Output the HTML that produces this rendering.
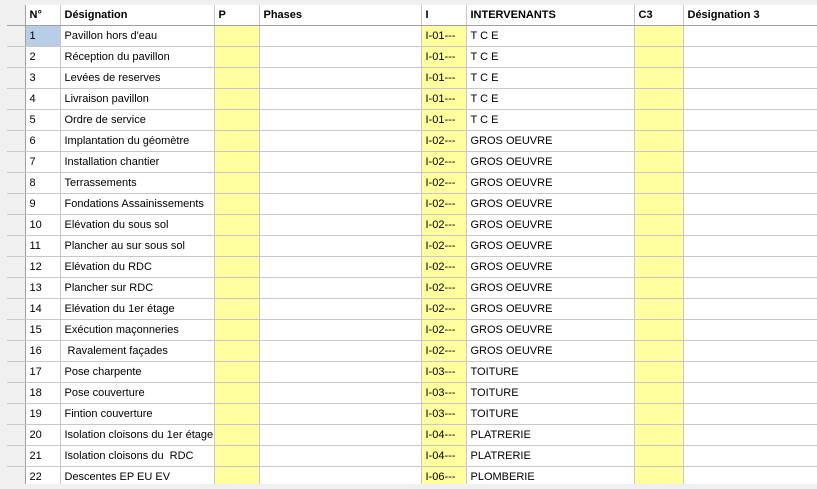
<!DOCTYPE html><html><head><style>
body{margin:0;width:817px;height:489px;background:#f0f0f0;overflow:hidden;font-family:"Liberation Sans",Arial,sans-serif;font-size:11px;position:relative}
table{position:absolute;left:7px;top:5px;width:810px;border-collapse:collapse;table-layout:fixed;background:#fff}
td,th{height:21px;box-sizing:border-box;border-right:1px solid #c8c8c8;border-bottom:1px solid #c8c8c8;padding:0 0 0 4px;white-space:nowrap;overflow:hidden;text-align:left;color:#000}
th{font-weight:bold;font-size:11px;background:#fff;border-bottom:1px solid #a0a0a0;height:20px}
td.ind,th.ind{background:#f0f0f0;border-right:1px solid #a0a0a0;padding:0}
.y{background:#ffff9f}
.sel{background:#b8cde8}
</style></head><body>
<table>
<colgroup><col style="width:18px"><col style="width:35px"><col style="width:154px"><col style="width:45px"><col style="width:162px"><col style="width:45px"><col style="width:168px"><col style="width:49px"><col style="width:134px"></colgroup>
<tr><th class="ind"></th><th>N°</th><th>Désignation</th><th>P</th><th>Phases</th><th>I</th><th>INTERVENANTS</th><th>C3</th><th>Désignation 3</th></tr>
<tr><td class="ind"></td><td class="sel">1</td><td>Pavillon hors d'eau</td><td class="y"></td><td></td><td class="y">I-01---</td><td>T C E</td><td class="y"></td><td></td></tr>
<tr><td class="ind"></td><td>2</td><td>Réception du pavillon</td><td class="y"></td><td></td><td class="y">I-01---</td><td>T C E</td><td class="y"></td><td></td></tr>
<tr><td class="ind"></td><td>3</td><td>Levées de reserves</td><td class="y"></td><td></td><td class="y">I-01---</td><td>T C E</td><td class="y"></td><td></td></tr>
<tr><td class="ind"></td><td>4</td><td>Livraison pavillon</td><td class="y"></td><td></td><td class="y">I-01---</td><td>T C E</td><td class="y"></td><td></td></tr>
<tr><td class="ind"></td><td>5</td><td>Ordre de service</td><td class="y"></td><td></td><td class="y">I-01---</td><td>T C E</td><td class="y"></td><td></td></tr>
<tr><td class="ind"></td><td>6</td><td>Implantation du géomètre</td><td class="y"></td><td></td><td class="y">I-02---</td><td>GROS OEUVRE</td><td class="y"></td><td></td></tr>
<tr><td class="ind"></td><td>7</td><td>Installation chantier</td><td class="y"></td><td></td><td class="y">I-02---</td><td>GROS OEUVRE</td><td class="y"></td><td></td></tr>
<tr><td class="ind"></td><td>8</td><td>Terrassements</td><td class="y"></td><td></td><td class="y">I-02---</td><td>GROS OEUVRE</td><td class="y"></td><td></td></tr>
<tr><td class="ind"></td><td>9</td><td>Fondations Assainissements</td><td class="y"></td><td></td><td class="y">I-02---</td><td>GROS OEUVRE</td><td class="y"></td><td></td></tr>
<tr><td class="ind"></td><td>10</td><td>Elévation du sous sol</td><td class="y"></td><td></td><td class="y">I-02---</td><td>GROS OEUVRE</td><td class="y"></td><td></td></tr>
<tr><td class="ind"></td><td>11</td><td>Plancher au sur sous sol</td><td class="y"></td><td></td><td class="y">I-02---</td><td>GROS OEUVRE</td><td class="y"></td><td></td></tr>
<tr><td class="ind"></td><td>12</td><td>Elévation du RDC</td><td class="y"></td><td></td><td class="y">I-02---</td><td>GROS OEUVRE</td><td class="y"></td><td></td></tr>
<tr><td class="ind"></td><td>13</td><td>Plancher sur RDC</td><td class="y"></td><td></td><td class="y">I-02---</td><td>GROS OEUVRE</td><td class="y"></td><td></td></tr>
<tr><td class="ind"></td><td>14</td><td>Elévation du 1er étage</td><td class="y"></td><td></td><td class="y">I-02---</td><td>GROS OEUVRE</td><td class="y"></td><td></td></tr>
<tr><td class="ind"></td><td>15</td><td>Exécution maçonneries</td><td class="y"></td><td></td><td class="y">I-02---</td><td>GROS OEUVRE</td><td class="y"></td><td></td></tr>
<tr><td class="ind"></td><td>16</td><td>&nbsp;Ravalement façades</td><td class="y"></td><td></td><td class="y">I-02---</td><td>GROS OEUVRE</td><td class="y"></td><td></td></tr>
<tr><td class="ind"></td><td>17</td><td>Pose charpente</td><td class="y"></td><td></td><td class="y">I-03---</td><td>TOITURE</td><td class="y"></td><td></td></tr>
<tr><td class="ind"></td><td>18</td><td>Pose couverture</td><td class="y"></td><td></td><td class="y">I-03---</td><td>TOITURE</td><td class="y"></td><td></td></tr>
<tr><td class="ind"></td><td>19</td><td>Fintion couverture</td><td class="y"></td><td></td><td class="y">I-03---</td><td>TOITURE</td><td class="y"></td><td></td></tr>
<tr><td class="ind"></td><td>20</td><td>Isolation cloisons du 1er étage</td><td class="y"></td><td></td><td class="y">I-04---</td><td>PLATRERIE</td><td class="y"></td><td></td></tr>
<tr><td class="ind"></td><td>21</td><td>Isolation cloisons du &nbsp;RDC</td><td class="y"></td><td></td><td class="y">I-04---</td><td>PLATRERIE</td><td class="y"></td><td></td></tr>
<tr><td class="ind"></td><td>22</td><td>Descentes EP EU EV</td><td class="y"></td><td></td><td class="y">I-06---</td><td>PLOMBERIE</td><td class="y"></td><td></td></tr>
</table>
<div style="position:absolute;left:0;top:484px;width:817px;height:5px;background:#f0f0f0"></div>
</body></html>
